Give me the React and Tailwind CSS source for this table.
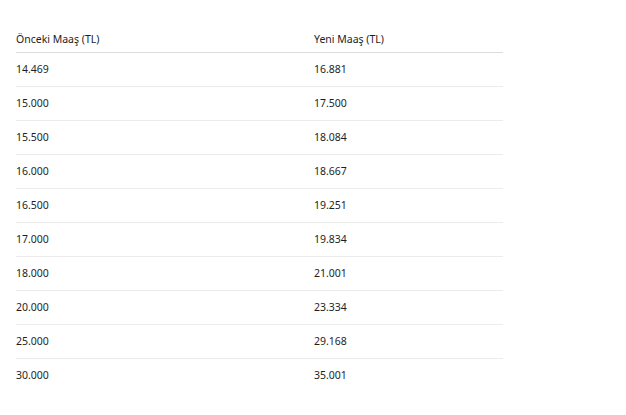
import React from 'react';

const rows = [
  ["14.469", "16.881"],
  ["15.000", "17.500"],
  ["15.500", "18.084"],
  ["16.000", "18.667"],
  ["16.500", "19.251"],
  ["17.000", "19.834"],
  ["18.000", "21.001"],
  ["20.000", "23.334"],
  ["25.000", "29.168"],
  ["30.000", "35.001"],
];

const App = () => (
  <div className="w-[626px] h-[415px] bg-white pl-4 pt-[27px] font-['Noto_Sans',sans-serif] text-[10.5px] text-[#1e1e1e]">
    <table className="w-[487px] border-collapse">
      <thead>
        <tr className="h-[25px] border-b border-[#dcdcdc]">
          <th className="w-[298px] p-0 pt-[2px] text-left font-normal align-middle">Önceki Maaş (TL)</th>
          <th className="p-0 pt-[2px] text-left font-normal align-middle">Yeni Maaş (TL)</th>
        </tr>
      </thead>
      <tbody>
        {rows.map((r, i) => (
          <tr key={i} className={`h-[34px] ${i < rows.length - 1 ? 'border-b border-[#ececec]' : ''}`}>
            <td className="p-0 pt-[2px] align-middle">{r[0]}</td>
            <td className="p-0 pt-[2px] align-middle">{r[1]}</td>
          </tr>
        ))}
      </tbody>
    </table>
  </div>
);

export default App;
